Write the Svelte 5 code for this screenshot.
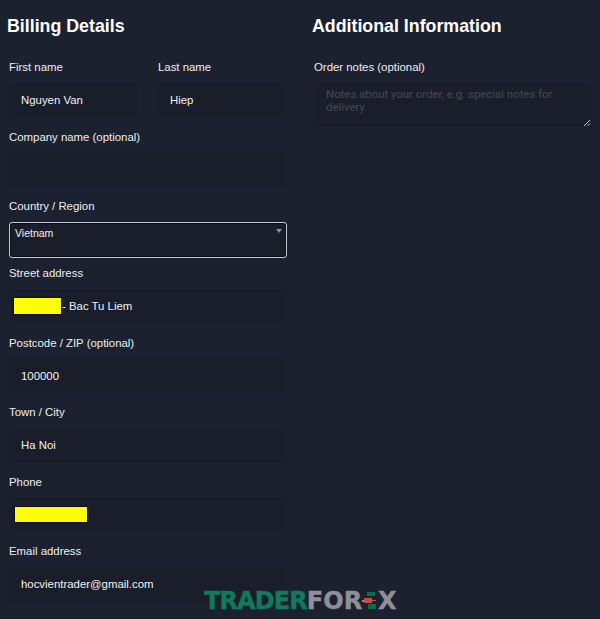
<script lang="ts">
  // left column rows after the name row
  const fields = [
    { label: 'Street address', value: '- Bac Tu Liem', mask: 'street' },
    { label: 'Postcode / ZIP (optional)', value: '100000' },
    { label: 'Town / City', value: 'Ha Noi' },
    { label: 'Phone', value: '', mask: 'phone' },
    { label: 'Email address', value: 'hocvientrader@gmail.com' }
  ];
</script>

<div class="page">
  <section class="billing">
    <h2>Billing Details</h2>
    <div class="form">
      <div class="name-row">
        <div class="field">
          <span class="label">First name</span>
          <div class="input">Nguyen Van</div>
        </div>
        <div class="field">
          <span class="label">Last name</span>
          <div class="input">Hiep</div>
        </div>
      </div>

      <div class="field">
        <span class="label">Company name (optional)</span>
        <div class="input"></div>
      </div>

      <div class="field country">
        <span class="label">Country / Region</span>
        <div class="select">
          <span>Vietnam</span>
          <i class="caret"></i>
        </div>
      </div>

      {#each fields as f}
        <div class="field">
          <span class="label">{f.label}</span>
          <div class="input" class:masked={f.mask}>
            {#if f.mask}<i class="mask {f.mask}"></i>{/if}{f.value}
          </div>
        </div>
      {/each}
    </div>
  </section>

  <section class="additional">
    <h2>Additional Information</h2>
    <div class="field notes">
      <span class="label">Order notes (optional)</span>
      <div class="textarea">
        Notes about your order, e.g. special notes for delivery.
        <svg class="grip" width="8" height="8" viewBox="0 0 8 8">
          <path d="M1 7 7 1M4.5 7 7 4.5" stroke="#c9ccd2" stroke-width="1" fill="none" />
        </svg>
      </div>
    </div>
  </section>

  <!-- watermark over the page -->
  <div class="watermark">
    <span class="green">TRADER</span><span class="grey wide">FOR</span>
    <svg class="candle" width="16" height="20" viewBox="0 0 16 20">
      <rect x="5" y="1" width="8" height="4" fill="#0f6b45" />
      <rect x="0" y="9" width="2" height="2" fill="#8d9097" />
      <rect x="2" y="7" width="8" height="5" fill="#c94a50" />
      <rect x="10" y="9" width="4" height="1" fill="#c94a50" />
      <rect x="6" y="13" width="8" height="5" fill="#0f6b45" />
    </svg>
    <span class="grey">X</span>
  </div>
</div>

<style>
  :global(body) {
    margin: 0;
    background: #1c2130;
  }

  .page {
    position: relative;
    width: 600px;
    height: 619px;
    overflow: hidden;
    display: flex;
    box-sizing: border-box;
    padding: 15px 9px 0;
    background: #1c2130;
    color: #f0f1f3;
    font-family: "Liberation Sans", Arial, sans-serif;
  }

  h2 {
    margin: 0 0 0 -2px;
    font-size: 17.8px;
    line-height: 22px;
    font-weight: 700;
    color: #fff;
  }

  .billing {
    width: 277px;
    margin-right: 28px;
  }

  .additional {
    width: 277px;
  }

  .form {
    margin-top: 23px;
    display: flex;
    flex-direction: column;
    gap: 12px;
  }

  .name-row {
    display: grid;
    grid-template-columns: 128px 128px;
    column-gap: 21px;
  }

  .field {
    display: flex;
    flex-direction: column;
    gap: 7.5px;
  }

  .country {
    margin-bottom: -3.5px;
  }

  .notes {
    margin-top: 23px;
  }

  .label {
    font-size: 11.4px;
    line-height: 15px;
    color: #eceef0;
  }

  .input {
    height: 35px;
    box-sizing: border-box;
    padding-left: 12px;
    display: flex;
    align-items: center;
    background: #1a1e2b;
    font-size: 11.4px;
    color: #f0f1f3;
  }

  .input.masked {
    padding-left: 4px;
  }

  .mask {
    display: block;
    background: #ffff00;
    border: 1px solid #0c0e14;
    box-sizing: border-box;
  }

  .mask.street {
    width: 49px;
    height: 18px;
  }

  .mask.phone {
    width: 74px;
    height: 17px;
    margin-left: 1px;
  }

  .select {
    position: relative;
    height: 36px;
    width: 278px;
    box-sizing: border-box;
    padding: 4px 5px;
    border: 1px solid #c5c8d0;
    border-radius: 3px;
    background: #1a1e2b;
    box-shadow: inset 0 0 0 1px #0c0e14;
    font-size: 10.5px;
    line-height: 12px;
    color: #f0f1f3;
  }

  .caret {
    position: absolute;
    top: 6px;
    right: 4px;
    border-left: 3px solid transparent;
    border-right: 3px solid transparent;
    border-top: 4px solid #8d9097;
  }

  .textarea {
    position: relative;
    height: 44px;
    box-sizing: border-box;
    padding: 5px 12px;
    background: #1a1e2b;
    font-size: 11.4px;
    line-height: 13.5px;
    color: #454955;
    font-family: Roboto, "Liberation Sans", sans-serif;
  }

  .grip {
    position: absolute;
    right: 0;
    bottom: 0;
  }

  .watermark {
    position: absolute;
    left: 204px;
    top: 588px;
    display: flex;
    align-items: center;
    height: 26px;
    font-family: "DejaVu Sans", sans-serif;
    font-size: 24px;
    font-weight: 700;
    line-height: 26px;
    letter-spacing: -0.9px;
    -webkit-text-stroke: 0.4px currentColor;
  }

  .green {
    color: #0f7a5c;
  }

  .grey {
    color: #8d9097;
  }

  .wide {
    letter-spacing: 0;
  }

  .candle {
    flex: none;
  }
</style>
